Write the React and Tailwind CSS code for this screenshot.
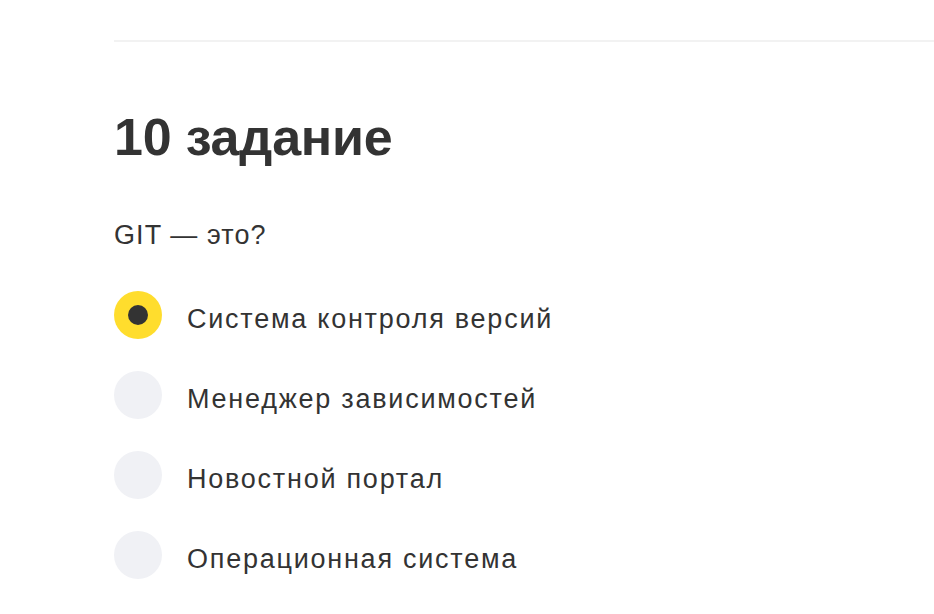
import React, { useState } from 'react';

const options = [
  'Система контроля версий',
  'Менеджер зависимостей',
  'Новостной портал',
  'Операционная система',
];

const App = () => {
  const [selected, setSelected] = useState(0);

  return (
    <div className="min-h-[614px] bg-white pl-[114px] pt-[40px] text-[#333333] font-['Liberation_Sans',Arial,sans-serif]">
      <div className="h-[2px] bg-[#f2f2f2]" />
      <h2 className="mt-[69px] text-[52px] font-bold leading-[52px] tracking-[-0.004em]">10 задание</h2>
      <p className="mt-[59px] text-[27px] leading-[26px] tracking-[0.04em]">GIT — это?</p>
      <div className="mt-[43px] flex flex-col gap-[32px]">
        {options.map((label, i) => (
          <label
            key={label}
            className="flex items-center gap-[25px] cursor-pointer"
            onClick={() => setSelected(i)}
          >
            {selected === i ? (
              <span className="flex h-[48px] w-[48px] items-center justify-center rounded-full bg-[#ffdd2d]">
                <span className="h-[20px] w-[20px] rounded-full bg-[#333333]" />
              </span>
            ) : (
              <span className="h-[48px] w-[48px] rounded-full bg-[#f0f1f5]" />
            )}
            <span className="pt-[8px] text-[27px] leading-[26px] tracking-[0.065em]">{label}</span>
          </label>
        ))}
      </div>
    </div>
  );
};

export default App;
